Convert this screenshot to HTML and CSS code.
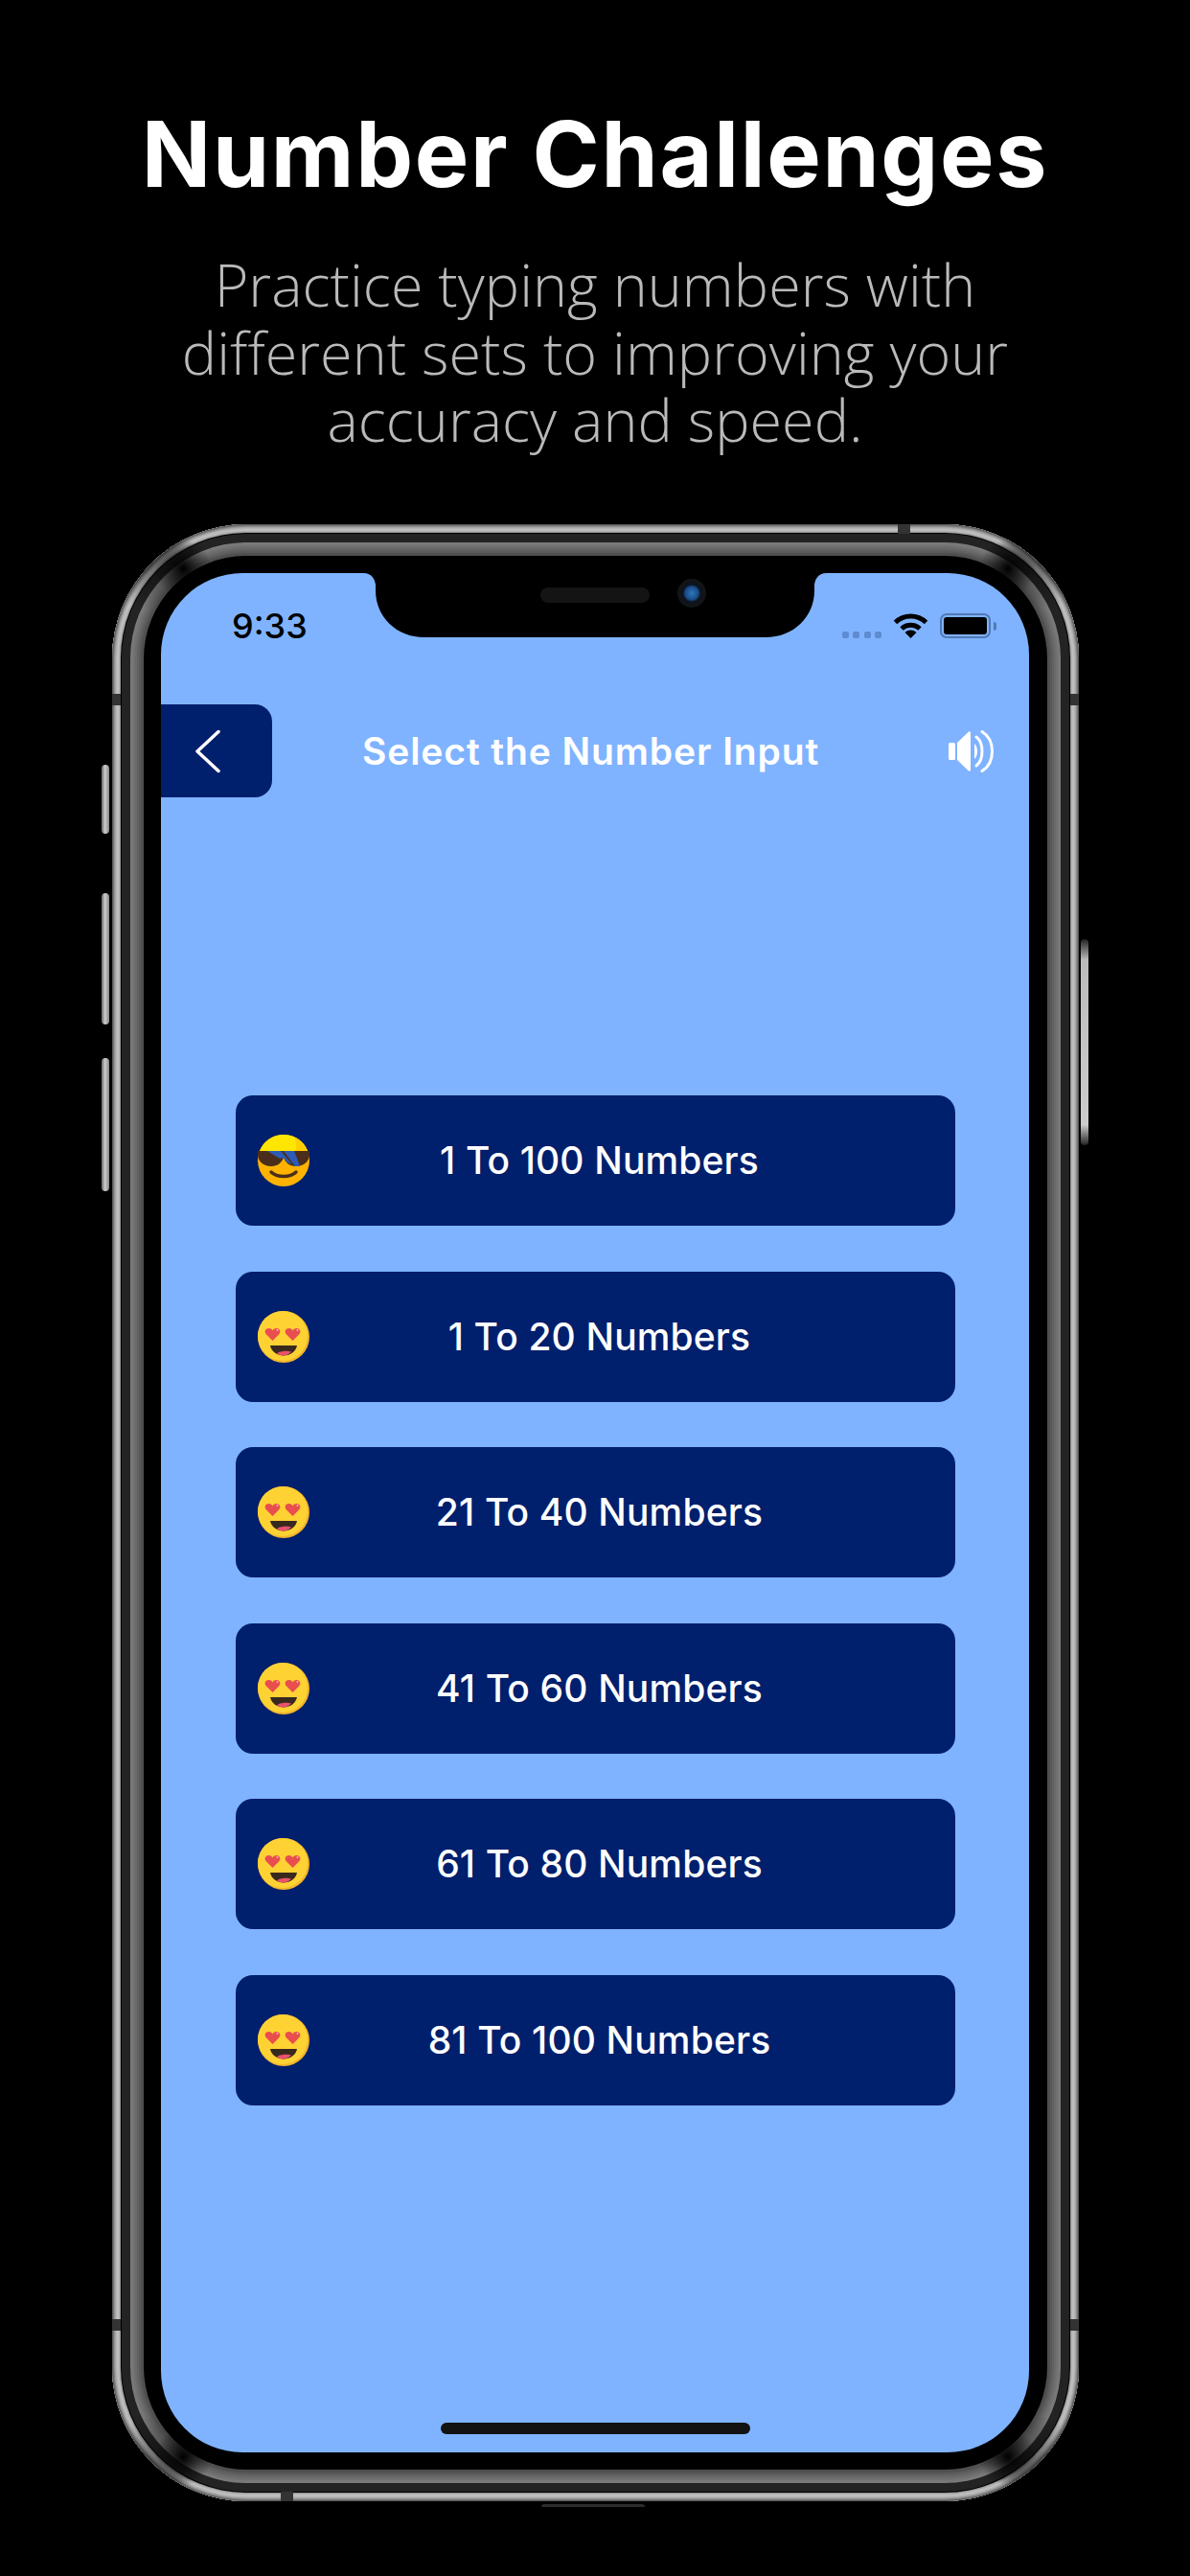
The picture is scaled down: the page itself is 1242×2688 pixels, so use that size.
FILE: index.html
```html
<!DOCTYPE html>
<html lang="en">
<head>
<meta charset="utf-8">
<title>Number Challenges</title>
<link rel="stylesheet" href="styles.css">
</head>
<body>
<svg class="defs" width="0" height="0" aria-hidden="true">
  <symbol id="love" viewBox="0 0 54 54">
    <circle cx="27" cy="27" r="27" fill="#f2b52c"/>
    <circle cx="26" cy="26" r="26" fill="#ffd234"/>
    <path d="M15.500 31 9 24.500C6.500 22 7.500 18 11.500 18 13.500 18 15 19 15.500 20.500 16 19 17.500 18 19.500 18 23.500 18 24.500 22 22 24.500Z" fill="#e94e4e"/>
    <path d="M36.500 31 30 24.500C27.500 22 28.500 18 32.500 18 34.500 18 36 19 36.500 20.500 37 19 38.500 18 40.500 18 44.500 18 45.500 22 43 24.500Z" fill="#e94e4e"/>
    <circle cx="20.500" cy="20" r="1" fill="#f7b6b6"/>
    <circle cx="41.500" cy="20" r="1" fill="#f7b6b6"/>
    <path d="M13 36H41C40 42 34 46.500 27 46.500S14 42 13 36Z" fill="#38291d"/>
    <path d="M20 44.500C22 41.500 31 41 35 42.500 32 45.500 29 46.500 27 46.500 24 46.500 22 45.800 20 44.500Z" fill="#e8526a"/>
  </symbol>
  <symbol id="cool" viewBox="0 0 54 54">
    <circle cx="27" cy="27" r="27" fill="#ffb300"/>
    <path d="M1.900 17A27 27 0 0 1 52.100 17Z" fill="#ffe600"/>
    <path d="M38.500 2.600A27 27 0 0 1 52.100 17H40C40 11 40 7 38.500 2.600Z" fill="#ffcf00"/>
    <path d="M0 17H54V20C54 28 48 33 40 33 33 33 29 29 27 24 25 29 21 33 14 33 6 33 0 28 0 20Z" fill="#4a2e1b"/>
    <path d="M10 17H24L36 31C32 30 29 28 27 24L23 25ZM27 17H38L44 32.500C42 33 41 33 39 33Z" fill="#2d5bb5"/>
    <path d="M14 39C20 45 34 45 40 39" fill="none" stroke="#4a2e1b" stroke-width="3.500" stroke-linecap="round"/>
  </symbol>
</svg>

<main class="page">
  <header class="intro">
    <h1 class="headline">Number Challenges</h1>
    <p class="lede">Practice typing numbers with<br>different sets to improving your<br>accuracy and speed.</p>
  </header>

  <section class="phone">
    <span class="side side-mute"></span>
    <span class="side side-up"></span>
    <span class="side side-down"></span>
    <span class="side side-power"></span>
    <span class="tick tick-top"></span>
    <span class="tick tick-bottom"></span>
    <span class="tick tick-lt"></span>
    <span class="tick tick-rt"></span>
    <span class="tick tick-lb"></span>
    <span class="tick tick-rb"></span>
    <span class="under"></span>

    <div class="screen">
      <svg class="notch" viewBox="0 0 484 68" aria-hidden="true">
        <path d="M0 0H484C474 0 472 7 471 12V18C471 46 449 67 420 67H64C35 67 13 46 13 18V12C12 7 10 0 0 0Z" fill="#000"/>
      </svg>
      <span class="earpiece"></span>
      <span class="camera"></span>

      <div class="status">
        <span class="time">9:33</span>
        <span class="signal"><i></i><i></i><i></i><i></i></span>
        <svg class="wifi" viewBox="0 0 37 26" aria-hidden="true">
          <path d="M2.500 9.500A23 23 0 0 1 34.500 9.500" fill="none" stroke="#000" stroke-width="5"/>
          <path d="M9 16A14 14 0 0 1 28 16" fill="none" stroke="#000" stroke-width="5"/>
          <path d="M18.500 26 12.500 20A8.500 8.500 0 0 1 24.500 20Z" fill="#000"/>
        </svg>
        <span class="battery"><i class="level"></i></span>
        <span class="nub"></span>
      </div>

      <nav class="topbar">
        <button class="back" type="button" aria-label="Back">
          <svg viewBox="0 0 28 46" aria-hidden="true">
            <path d="M25 2.500 3 23l22 20.500" fill="none" stroke="#fff" stroke-width="3.500" stroke-linecap="round" stroke-linejoin="round"/>
          </svg>
        </button>
        <h2 class="bar-title">Select the Number Input</h2>
        <svg class="sound" viewBox="0 0 48 44" aria-hidden="true">
          <rect x="0" y="13" width="7" height="18" rx="1.500" fill="#fff"/>
          <path d="M9 13 21 1.500Q23 .5 23 3V41Q23 43.500 21 42.500L9 31Z" fill="#fff"/>
          <path d="M27 14C31 17 31 27 27 30Z" fill="#fff"/>
          <path d="M29 7C37 13 37 31 29 37" fill="none" stroke="#fff" stroke-width="3" stroke-linecap="round"/>
          <path d="M35 1.500C49 10 49 34 35 42.500" fill="none" stroke="#fff" stroke-width="3" stroke-linecap="round"/>
        </svg>
      </nav>

      <div class="choices">
        <button class="choice" type="button"><svg class="emoji"><use href="#cool"/></svg><span class="choice-label">1 To 100 Numbers</span></button>
        <button class="choice" type="button"><svg class="emoji"><use href="#love"/></svg><span class="choice-label">1 To 20 Numbers</span></button>
        <button class="choice" type="button"><svg class="emoji"><use href="#love"/></svg><span class="choice-label">21 To 40 Numbers</span></button>
        <button class="choice" type="button"><svg class="emoji"><use href="#love"/></svg><span class="choice-label">41 To 60 Numbers</span></button>
        <button class="choice" type="button"><svg class="emoji"><use href="#love"/></svg><span class="choice-label">61 To 80 Numbers</span></button>
        <button class="choice" type="button"><svg class="emoji"><use href="#love"/></svg><span class="choice-label">81 To 100 Numbers</span></button>
      </div>

      <span class="home"></span>
    </div>
  </section>
</main>
</body>
</html>
```

FILE: styles.css
```css
* { box-sizing: border-box; }
html, body { margin: 0; padding: 0; background: #000; }
.defs { position: absolute; }
.page { width: 1242px; height: 2688px; overflow: hidden; background: #000; display: flex; flex-direction: column; }

.intro { height: 547px; padding-top: 108px; text-align: center; }
.headline { margin: 0; font: 700 95px/106px Inter, "Liberation Sans", sans-serif; color: #fff; letter-spacing: 1.700px; }
.lede { margin: 48px 0 0; font: 300 61px/70.500px "Open Sans", "Noto Sans", sans-serif; color: #bababa; letter-spacing: .05px; }

.phone {
  position: relative; width: 1009px; height: 2063px; margin-left: 117px; padding: 51px;
  border-radius: 140px; background: #000;
  box-shadow:
    inset 0 0 0 1px #5a5a5a, inset 0 0 0 2px #767676, inset 0 0 0 3px #909090, inset 0 0 0 4px #a6a6a6,
    inset 0 0 0 5px #b4b4b4, inset 0 0 0 6px #bebebe, inset 0 0 0 7px #bebebe, inset 0 0 0 8px #b0b0b0,
    inset 0 0 0 9px #989898, inset 0 0 0 10px #000, inset 0 0 0 19px #232323,
    inset 0 0 0 20px #7c7c7c, inset 0 0 0 22px #787878, inset 0 0 0 24px #717171, inset 0 0 0 26px #6a6a6a,
    inset 0 0 0 28px #626262, inset 0 0 0 30px #5a5a5a, inset 0 0 0 33px #4f4f4f;
}
.phone::after {
  content: ""; position: absolute; inset: 0; border-radius: 140px; pointer-events: none;
  background:
    radial-gradient(circle at 74px 46px, #000 0, transparent 30px),
    radial-gradient(circle at 935px 46px, #000 0, transparent 30px),
    radial-gradient(circle at 74px 2017px, #000 0, transparent 30px),
    radial-gradient(circle at 935px 2017px, #000 0, transparent 30px),
    radial-gradient(circle at 41px 41px, rgba(0,0,0,.45) 0, transparent 48px),
    radial-gradient(circle at 968px 41px, rgba(0,0,0,.45) 0, transparent 48px),
    radial-gradient(circle at 41px 2022px, rgba(0,0,0,.45) 0, transparent 48px),
    radial-gradient(circle at 968px 2022px, rgba(0,0,0,.45) 0, transparent 48px);
}

.side { position: absolute; width: 8px; border-radius: 4px; background: linear-gradient(90deg, #666, #ccc 45%, #888); }
.side-mute { left: -11px; top: 251px; height: 72px; }
.side-up { left: -11px; top: 385px; height: 137px; }
.side-down { left: -11px; top: 557px; height: 139px; }
.side-power { left: 1011px; top: 433px; height: 215px; background: linear-gradient(#222, #bbb 10%, #ccc 90%, #222); }

.tick { position: absolute; background: #333; z-index: 2; }
.tick-top { left: 820px; top: 0; width: 13px; height: 10px; }
.tick-bottom { left: 176px; bottom: 0; width: 13px; height: 10px; }
.tick-lt, .tick-rt, .tick-lb, .tick-rb { width: 9px; height: 12px; }
.tick-lt { left: 0; top: 177px; }
.tick-rt { right: 0; top: 177px; }
.tick-lb { left: 0; top: 1873px; }
.tick-rb { right: 0; top: 1873px; }
.under { position: absolute; left: 448px; bottom: -6px; width: 108px; height: 3px; border-radius: 3px 3px 0 0; background: #2c2c2c; }

.screen {
  position: relative; z-index: 3; width: 906px; height: 1961px; border-radius: 85px; overflow: hidden;
  background: #7fb3ff; display: flex; flex-direction: column;
}
.notch { position: absolute; left: 211px; top: 0; width: 484px; height: 68px; }
.earpiece { position: absolute; left: 396px; top: 15px; width: 114px; height: 16px; border-radius: 8px; background: #141414; }
.camera {
  position: absolute; left: 539px; top: 6px; width: 30px; height: 30px; border-radius: 50%;
  background: radial-gradient(circle, #2f78b8 0, #174a86 7px, #0c1420 9px, #141414 15px);
}

.status { position: relative; height: 70px; padding: 0 34px 0 74px; display: flex; align-items: flex-end; }
.time { font: 500 36px/35px Inter, "Liberation Sans", sans-serif; color: #000; margin-bottom: -3px; margin-right: auto; }
.signal { display: flex; gap: 4.300px; margin-right: 12px; margin-bottom: 2px; }
.signal i { width: 7px; height: 7px; border-radius: 2px; background: #5f8bd0; }
.wifi { width: 37px; height: 26px; margin-right: 12px; margin-bottom: 2px; }
.battery { width: 53px; height: 26px; border: 2px solid #5279b5; border-radius: 7px; padding: 2px; margin-bottom: 2px; }
.level { display: block; width: 100%; height: 100%; background: #000; border-radius: 3px; }
.nub { width: 3px; height: 9px; margin: 0 0 10px 3px; background: #5279b5; border-radius: 0 3px 3px 0; }

.topbar { height: 97px; margin-top: 67px; display: flex; align-items: center; padding-right: 36px; }
.back { width: 116px; height: 97px; padding: 0 0 0 35px; border: 0; border-radius: 0 18px 18px 0; background: #001f6c; display: flex; align-items: center; }
.back svg { width: 28px; height: 46px; }
.bar-title { margin: 0 0 0 94px; font: 600 39px/46px Inter, "Liberation Sans", sans-serif; letter-spacing: .9px; color: #fff; white-space: nowrap; }
.sound { width: 48px; height: 44px; margin-left: auto; }

.choices { margin: 311px 0 0 78px; width: 751px; display: flex; flex-direction: column; gap: 47.500px; }
.choice { height: 136px; padding: 0 69px 0 23px; border: 0; border-radius: 18px; background: #001f6c; display: flex; align-items: center; }
.emoji { width: 54px; height: 54px; flex: none; }
.choice-label { flex: 1; text-align: center; font: 500 39px/46px Inter, "Liberation Sans", sans-serif; letter-spacing: .15px; color: #fff; }

.home { position: absolute; left: 292px; top: 1930px; width: 323px; height: 12px; border-radius: 6px; background: #121212; }
```
